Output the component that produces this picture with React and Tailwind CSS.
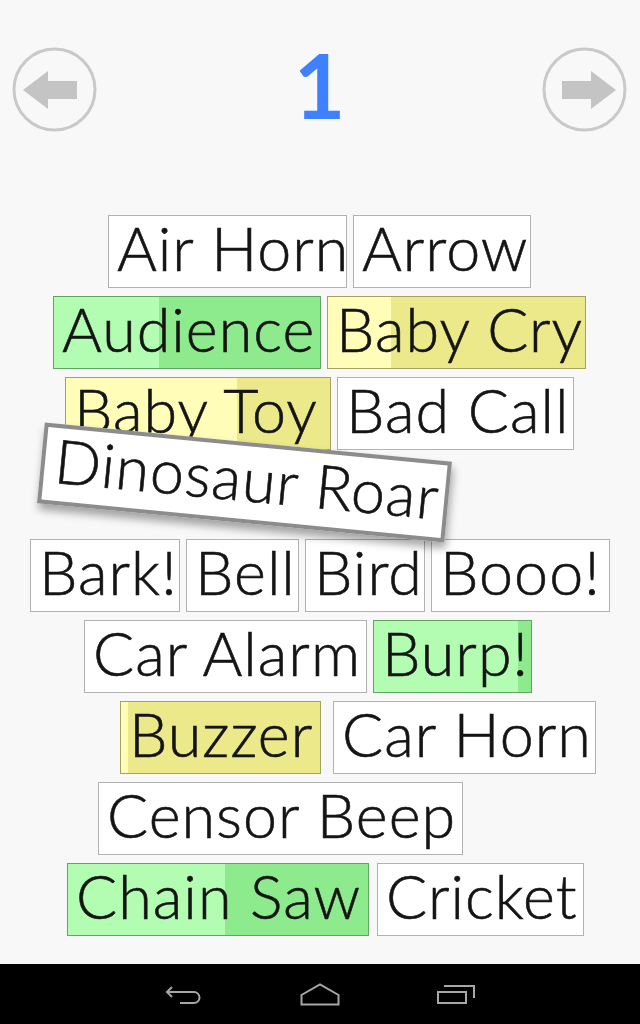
import React from 'react'

const fills = {
    green: { dark: 'bg-[#8deb8d]', light: 'bg-[#b3fdb3]' },
    yellow: { dark: 'bg-[#ebe98a]', light: 'bg-[#fffdb8]' },
}

const rows = [
    [
        { t: 'Air Horn', c: 'ml-[108px] w-[239px]' },
        { t: 'Arrow', c: 'ml-[6px] w-[178px]' },
    ],
    [
        { t: 'Audience', c: 'ml-[53px] w-[268px]', k: 'green', p: 106 },
        { t: 'Baby Cry', c: 'ml-[6px] w-[259px]', k: 'yellow', p: 64 },
    ],
    [
        { t: 'Baby Toy', c: 'ml-[65px] w-[266px]', k: 'yellow', p: 172 },
        { t: 'Bad Call', c: 'ml-[6px] w-[237px]' },
    ],
    null,
    [
        { t: 'Bark!', c: 'ml-[30px] w-[150px]' },
        { t: 'Bell', c: 'ml-[6px] w-[113px]' },
        { t: 'Bird', c: 'ml-[6px] w-[120px]' },
        { t: 'Booo!', c: 'ml-[6px] w-[179px]' },
    ],
    [
        { t: 'Car Alarm', c: 'ml-[84px] w-[283px]' },
        { t: 'Burp!', c: 'ml-[6px] w-[159px]', k: 'green', p: 145 },
    ],
    [
        { t: 'Buzzer', c: 'ml-[120px] w-[201px]', k: 'yellow', p: 8 },
        { t: 'Car Horn', c: 'ml-[12px] w-[263px]' },
    ],
    [
        { t: 'Censor Beep', c: 'ml-[98px] w-[365px]' },
    ],
    [
        { t: 'Chain Saw', c: 'ml-[67px] w-[302px]', k: 'green', p: 158 },
        { t: 'Cricket', c: 'ml-[8px] w-[207px]' },
    ],
]

// shared text look of every sound tag
const label = 'text-[61px] leading-[63px] font-light tracking-[1px] text-[#141414] whitespace-nowrap [-webkit-text-stroke:0.6px_#141414]'

function Tag({ t, c, k, p }) {
    const f = k ? fills[k] : null
    return (
        <div className={`relative shrink-0 h-[73px] border border-black/30 pl-[8px] ${label} ${f ? f.dark : 'bg-white'} ${c}`}>
            {f && <span className={`absolute left-0 top-0 bottom-0 ${f.light}`} style={{ width: p - 1 }}></span>}
            <span className="relative">{t}</span>
        </div>
    )
}

function NavArrow({ dir }) {
    return (
        <svg width="85" height="85" viewBox="0 0 85 85" className="shrink-0">
            <circle cx="42.5" cy="42.5" r="40.5" fill="none" stroke="#c9c9c9" strokeWidth="3" />
            <g transform={dir === 'right' ? 'translate(85 0) scale(-1 1)' : undefined}>
                <path d="M11 43 L36 24 V34 H65 V52 H36 V62 Z" fill="#c4c4c4" />
            </g>
        </svg>
    )
}

export default function App() {
    return (
        <div className="flex flex-col h-[1024px] bg-[#f8f8f8] font-['Lato',sans-serif] overflow-hidden">
            <div className="flex justify-between items-start h-[85px] mt-[47px] pl-[12px] pr-[13px]">
                <NavArrow dir="left" />
                <div className="-mt-[7px] text-[89px] leading-none font-bold text-[#3f80ff]">1</div>
                <NavArrow dir="right" />
            </div>

            <div className="flex flex-col gap-[8px] mt-[83px]">
                {rows.map((row, i) => row ? (
                    <div key={i} className="flex h-[73px]">
                        {row.map(tag => <Tag key={tag.t} {...tag} />)}
                    </div>
                ) : (
                    <div key={i} className="flex h-[73px]">
                        <div className={`relative z-10 -top-[16px] ml-[40px] shrink-0 w-[409px] h-[81px] rotate-[5.5deg] bg-white border-4 border-[#8c8c8c] pl-[10px] shadow-[2px_6px_8px_rgba(0,0,0,0.35)] ${label}`}>
                            Dinosaur Roar
                        </div>
                    </div>
                ))}
            </div>

            <div className="mt-auto h-[60px] bg-black flex items-center justify-center gap-[96px]">
                <svg width="40" height="24" viewBox="0 0 40 24" fill="none" stroke="#a6a6a6" strokeWidth="2">
                    <path d="M8 5 L3 10 L8 15 M3 10 H30 A5.5 5.5 0 0 1 30 21 H16" />
                </svg>
                <svg width="40" height="24" viewBox="0 0 40 24" fill="none" stroke="#a6a6a6" strokeWidth="2">
                    <path d="M1.5 22.5 H38.5 V13 L20 2.5 L1.5 13 Z" />
                </svg>
                <svg width="40" height="24" viewBox="0 0 40 24" fill="none" stroke="#a6a6a6" strokeWidth="2">
                    <rect x="2" y="10" width="28" height="11" />
                    <path d="M8 4 H38 V16" />
                </svg>
            </div>
        </div>
    )
}
